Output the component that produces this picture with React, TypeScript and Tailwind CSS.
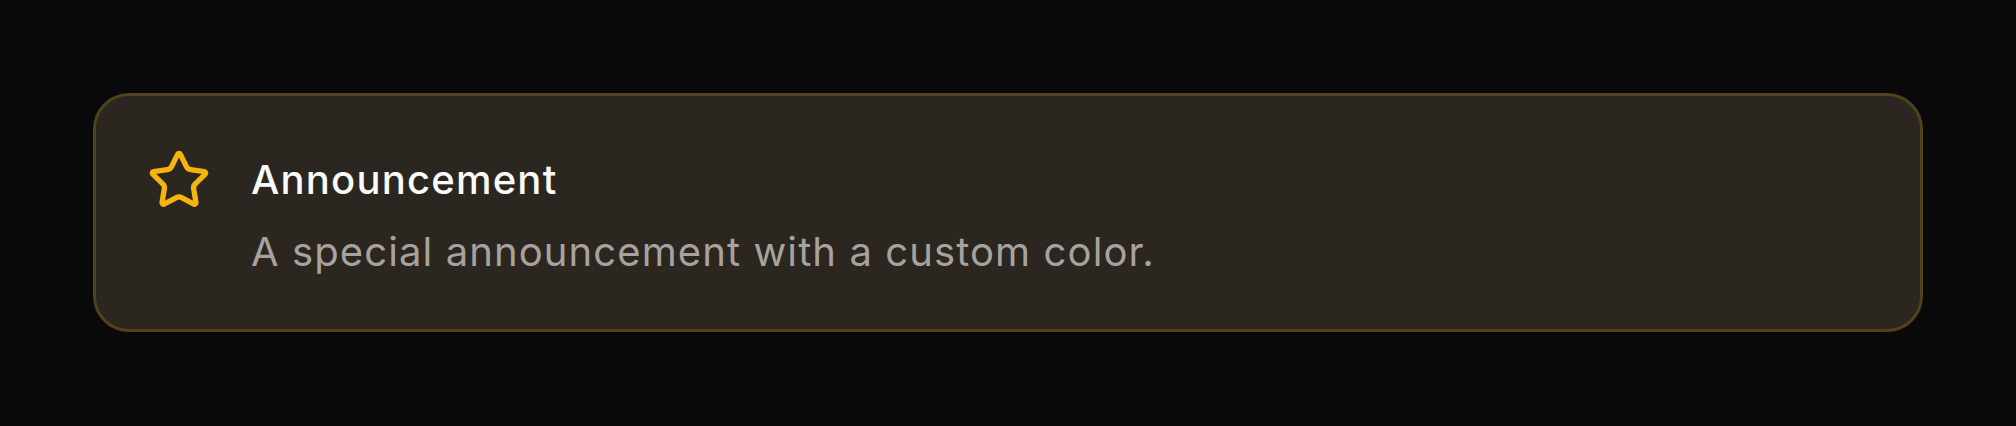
import { Star } from "lucide-react";

export default function App() {
  return (
    <div
      className="min-h-[426px] w-full bg-[#09090b] px-[93px] pt-[93px]"
      style={{ fontFamily: "Inter, 'Noto Sans', sans-serif" }}
    >
      <div className="flex h-[239px] items-start gap-[40px] rounded-[36px] border-[3px] border-[#51421a] bg-[#2b2620] pl-[51px] pt-[52px]">
        <Star className="size-[64px] shrink-0 text-[#f5b50d]" strokeWidth={2} />
        <div className="flex flex-col">
          <div className="text-[40px] leading-[64px] font-medium tracking-[1.2px] text-[#fafafa]">
            Announcement
          </div>
          <div className="mt-[12px] text-[40px] leading-[56px] tracking-[1.1px] text-[#a8a29e]">
            A special announcement with a custom color.
          </div>
        </div>
      </div>
    </div>
  );
}
